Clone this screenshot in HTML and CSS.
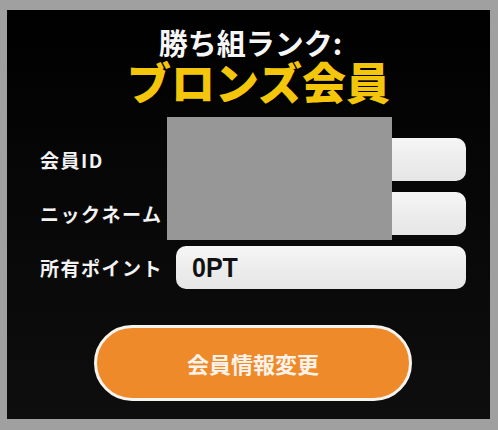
FILE: index.html
```html
<!DOCTYPE html>
<html lang="ja">
<head>
<meta charset="utf-8">
<title>会員情報</title>
<link rel="stylesheet" href="styles.css">
</head>
<body>
<div class="frame">
  <div class="panel">
    <div class="header">
      <div class="rank-label">勝ち組ランク:</div>
      <div class="rank-name">ブロンズ会員</div>
    </div>
    <div class="rows">
      <div class="row">
        <div class="label">会員ID</div>
        <div class="field"></div>
      </div>
      <div class="row">
        <div class="label">ニックネーム</div>
        <div class="field"></div>
      </div>
      <div class="row">
        <div class="label">所有ポイント</div>
        <div class="field"><span class="points">0PT</span></div>
      </div>
    </div>
    <div class="redact"></div>
    <div class="actions">
      <button class="btn">会員情報変更</button>
    </div>
  </div>
</div>
</body>
</html>
```
FILE: styles.css
```css
html, body {
  margin: 0;
  padding: 0;
}
body {
  background: #a0a0a0;
  font-family: "Noto Sans CJK JP", "Noto Sans", sans-serif;
}
.frame {
  padding: 10px 8px 11px 7px;
  width: 498px;
  height: 430px;
  box-sizing: border-box;
}
.panel {
  position: relative;
  width: 483px;
  height: 409px;
  background: linear-gradient(#000 0%, #050505 30%, #0e0e0e 100%);
  box-sizing: border-box;
  padding-top: 14px;
}
.header {
  text-align: center;
  font-weight: 900;
}
.rank-label {
  color: #f6f6f6;
  font-size: 29px;
  line-height: 36px;
  font-weight: 700;
  margin-left: 4px;
  text-shadow: 0 0 2px #000, 1px 1px 1px #000;
}
.rank-name {
  color: #f3c60b;
  font-size: 44px;
  line-height: 42px;
  font-weight: 900;
  margin-left: 20px;
  text-shadow: 1px 1px 2px #000, -1px -1px 2px #000;
}
.rows {
  display: flex;
  flex-direction: column;
  gap: 11px;
  margin-top: 36px;
  padding-left: 33px;
}
.row {
  display: flex;
  align-items: center;
  height: 43px;
}
.label {
  width: 136px;
  color: #f2f2f2;
  font-size: 19px;
  font-weight: 700;
  letter-spacing: 1.5px;
  white-space: nowrap;
}
.field {
  width: 290px;
  height: 43px;
  border-radius: 10px;
  background: linear-gradient(#f6f6f6 0%, #ececec 55%, #e6e6e6 100%);
  display: flex;
  align-items: center;
  padding-left: 16px;
  box-sizing: border-box;
}
.points {
  display: inline-block;
  font-family: "Liberation Sans", Arial, sans-serif;
  font-weight: 700;
  font-size: 25px;
  color: #111;
  transform: scaleY(1.1);
}
.redact {
  position: absolute;
  left: 160px;
  top: 107px;
  width: 225px;
  height: 123px;
  background: #979797;
}
.actions {
  margin-top: 36px;
  padding-left: 87px;
}
.btn {
  width: 318px;
  height: 76px;
  border: 3px solid #f7f3ee;
  border-radius: 40px;
  background: #ee8a2a;
  color: #fbf3ea;
  font-family: "Noto Sans CJK JP", sans-serif;
  font-size: 22px;
  font-weight: 700;
  letter-spacing: 0;
  padding: 0;
  display: block;
}
```
